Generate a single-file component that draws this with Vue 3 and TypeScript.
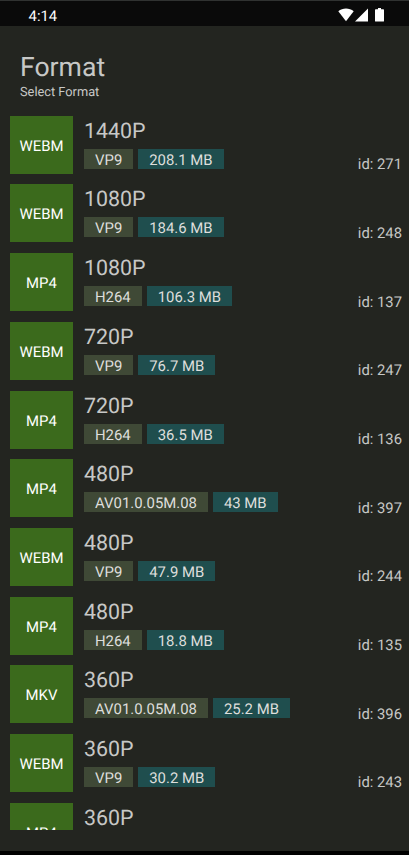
<script setup lang="ts">
interface Format {
  container: string
  quality: string
  codec?: string
  size?: string
  id?: number
}

const formats: Format[] = [
  { container: 'WEBM', quality: '1440P', codec: 'VP9', size: '208.1 MB', id: 271 },
  { container: 'WEBM', quality: '1080P', codec: 'VP9', size: '184.6 MB', id: 248 },
  { container: 'MP4', quality: '1080P', codec: 'H264', size: '106.3 MB', id: 137 },
  { container: 'WEBM', quality: '720P', codec: 'VP9', size: '76.7 MB', id: 247 },
  { container: 'MP4', quality: '720P', codec: 'H264', size: '36.5 MB', id: 136 },
  { container: 'MP4', quality: '480P', codec: 'AV01.0.05M.08', size: '43 MB', id: 397 },
  { container: 'WEBM', quality: '480P', codec: 'VP9', size: '47.9 MB', id: 244 },
  { container: 'MP4', quality: '480P', codec: 'H264', size: '18.8 MB', id: 135 },
  { container: 'MKV', quality: '360P', codec: 'AV01.0.05M.08', size: '25.2 MB', id: 396 },
  { container: 'WEBM', quality: '360P', codec: 'VP9', size: '30.2 MB', id: 243 },
  { container: 'MP4', quality: '360P' },
]
</script>

<template>
  <div class="screen">
    <header class="status">
      <span class="clock">4:14</span>
      <svg class="indicators" width="48" height="14" viewBox="0 0 48 14" fill="#fff">
        <path d="M0.3 3.2C4.6-.3 11.4-.3 15.7 3.2L8 13.3Z" />
        <path d="M17 13.6L30 .6V13.6Z" />
        <path d="M40 0h3v1.3h2.3q.7 0 .7.7v10.900q0 .7-.7.7h-7.600q-.7 0-.7-.7V2q0-.7.7-.7H40Z" />
      </svg>
    </header>
    <main class="sheet">
      <h1 class="title">Format</h1>
      <p class="subtitle">Select Format</p>
      <ul class="list">
        <li v-for="(f, i) in formats" :key="i" class="row">
          <div class="tile">{{ f.container }}</div>
          <div class="details">
            <div class="quality">{{ f.quality }}</div>
            <div class="chips">
              <span v-if="f.codec" class="chip codec">{{ f.codec }}</span>
              <span v-if="f.size" class="chip size">{{ f.size }}</span>
            </div>
          </div>
          <div v-if="f.id" class="format-id">id: {{ f.id }}</div>
        </li>
      </ul>
    </main>
    <footer class="nav"></footer>
  </div>
</template>

<style>
body {
  background: #000;
}
</style>

<style scoped>
.screen {
  box-sizing: border-box;
  display: flex;
  flex-direction: column;
  height: 855px;
  overflow: hidden;
  background: #232520;
  color: #c7c8c6;
  font-family: Roboto, "Liberation Sans", sans-serif;
  text-rendering: geometricPrecision;
}

.status {
  box-sizing: border-box;
  display: flex;
  flex: none;
  justify-content: space-between;
  height: 26px;
  padding: 6.5px 23.5px 0 28.6px;
  border-top: 1px solid #303231;
  background: #0a0a0a;
}

.clock {
  color: #fff;
  font-size: 14.8px;
  line-height: 16px;
}

.indicators {
  display: block;
}

.sheet {
  display: flex;
  flex: 1;
  flex-direction: column;
  min-height: 0;
  padding: 26px 0 21px;
}

.title {
  margin: 0 20px;
  font-size: 26.6px;
  font-weight: 400;
  line-height: 32px;
}

.subtitle {
  margin: 0 20px;
  font-size: 12.8px;
  line-height: 17px;
}

.list {
  flex: 1;
  min-height: 0;
  margin: 14.8px 0 0;
  padding: 0;
  overflow: hidden;
  list-style: none;
}

.row {
  display: flex;
  height: 58px;
  margin-bottom: 10.69px;
  padding: 0 7px 0 10px;
}

.tile {
  box-sizing: border-box;
  width: 63px;
  padding-top: 20px;
  background: #3b6a1c;
  color: #fff;
  font-size: 14.9px;
  line-height: 20px;
  text-align: center;
}

.details {
  flex: 1;
  margin-left: 11px;
}

.quality {
  padding-top: 3px;
  font-size: 21.4px;
  line-height: 26px;
}

.chips {
  display: flex;
  gap: 5px;
  margin-top: 4px;
}

.chip {
  height: 20px;
  padding: 0 11px;
  color: #dededc;
  font-size: 14.9px;
  line-height: 22px;
}

.codec {
  background: #3f4936;
}

.size {
  background: #1f4e4e;
}

.format-id {
  align-self: flex-end;
  padding-bottom: 0.5px;
  font-size: 14.8px;
  line-height: 18px;
}

.nav {
  flex: none;
  height: 4px;
  background: #000;
}
</style>
